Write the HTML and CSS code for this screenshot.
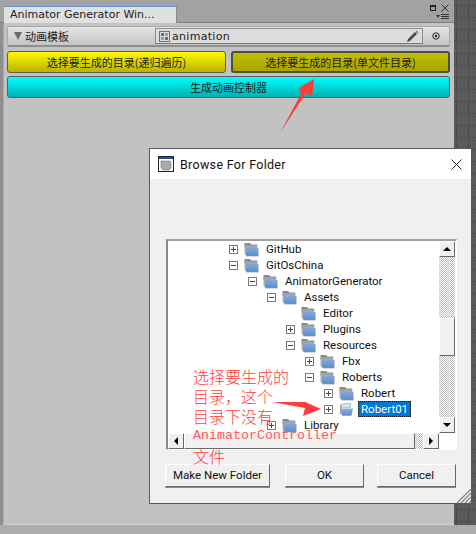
FILE: index.html
```html
<!DOCTYPE html>
<html lang="zh">
<head>
<meta charset="utf-8">
<title>Animator Generator</title>
<link rel="stylesheet" href="styles.css">
</head>
<body>
<svg width="0" height="0" class="defs">
  <defs>
    <linearGradient id="fg" x1="0" y1="0" x2="0" y2="1"><stop offset="0" stop-color="#86aee0"/><stop offset="1" stop-color="#5f8cc6"/></linearGradient>
    <symbol id="folder" viewBox="0 0 15 15">
      <path d="M0.5 1h5.5l1.5 1.5H13v3H.5z" fill="#8a8a8a"/>
      <path d="M0.5 3h13v10.5H2L.5 12z" fill="#a5a5a5" opacity=".85"/>
      <path d="M1 5l3 1h10.5v8H2.5z" fill="url(#fg)"/>
      <path d="M2.5 14.4h12" stroke="#c9c9c9" stroke-width=".8"/>
    </symbol>
    <symbol id="folder-open" viewBox="0 0 17 15">
      <path d="M2 2l9-1.5 2 .5v4H2z" fill="#e8e8e8" stroke="#999" stroke-width=".8"/>
      <path d="M1 3h2v10H1z" fill="#a5a5a5"/>
      <path d="M2 6.5h14l-2 8H3.5z" fill="url(#fg)"/>
    </symbol>
  </defs>
</svg>
<div class="editor">
  <div class="tabbar">
    <div class="tab">Animator Generator Win...</div>
    <div class="tab-tools">
      <div class="tool-top">
        <span class="max-icon"></span>
        <svg width="8" height="8" viewBox="0 0 8 8"><path d="M0.5 0.5l7 7M7.5 0.5l-7 7" stroke="#333" stroke-width="1" fill="none"/></svg>
      </div>
      <div class="menu-icon"><span class="menu-tri"></span><span class="menu-lines"></span></div>
    </div>
  </div>
  <div class="panel">
    <div class="field-row">
      <span class="fold"></span>
      <span class="field-label">动画模板</span>
      <div class="field">
        <svg class="asset-icon" width="11" height="11" viewBox="0 0 11 11"><rect x=".5" y=".5" width="10" height="10" fill="#d8dde0" stroke="#6b7378"/><rect x="2" y="2" width="3" height="3" fill="#5d7180"/><rect x="6" y="2" width="3" height="3" fill="#8fa3b0"/><rect x="2" y="6" width="3" height="3" fill="#8fa3b0"/><rect x="6" y="6" width="3" height="3" fill="#5d7180"/></svg>
        <span class="field-value">animation</span>
        <svg class="pencil" width="13" height="13" viewBox="0 0 13 13"><path d="M1 12l1-3 7-7 2 2-7 7z" fill="#4a4a4a"/><path d="M9.5 1.5l1-1 2 2-1 1z" fill="#777"/></svg>
      </div>
      <div class="picker"><svg width="8" height="8" viewBox="0 0 8 8"><circle cx="4" cy="4" r="3.2" fill="none" stroke="#222" stroke-width="1"/><circle cx="4" cy="4" r="1.2" fill="#222"/></svg></div>
    </div>
    <div class="btn-row">
      <div class="ubtn yellow">选择要生成的目录(递归遍历)</div>
      <div class="ubtn dark-yellow">选择要生成的目录(单文件目录)</div>
    </div>
    <div class="ubtn cyan">生成动画控制器</div>
  </div>
</div>

<svg class="arrow-one" width="40" height="60" viewBox="0 0 40 60"><polygon points="0,54 21,15 19,9 34,0 32,18 26,14" fill="#ff3b3b"/></svg>

<div class="dialog">
  <div class="titlebar">
    <svg width="16" height="16" viewBox="0 0 16 16"><rect x=".5" y=".5" width="15" height="15" fill="#fff" stroke="#222"/><rect x="1" y="1" width="14" height="2" fill="#2a4d8c"/><path d="M3 5h9l1 2v5l-2 2H5l-2-2z" fill="#aaa" stroke="#777" stroke-width=".6"/></svg>
    <span class="title-text">Browse For Folder</span>
    <svg class="close" width="11" height="11" viewBox="0 0 11 11"><path d="M.5.5l10 10M10.5.5l-10 10" stroke="#222" stroke-width="1" fill="none"/></svg>
  </div>
  <div class="dialog-body">
    <div class="treebox">
      <div class="tree">
        <div class="row l0"><span class="exp plus"></span><svg class="fld"><use href="#folder"/></svg><span class="name">GitHub</span></div>
        <div class="row l0"><span class="exp"></span><svg class="fld"><use href="#folder"/></svg><span class="name">GitOsChina</span></div>
        <div class="row l1"><span class="exp"></span><svg class="fld"><use href="#folder"/></svg><span class="name">AnimatorGenerator</span></div>
        <div class="row l2"><span class="exp"></span><svg class="fld"><use href="#folder"/></svg><span class="name">Assets</span></div>
        <div class="row l3"><span class="exp none"></span><svg class="fld"><use href="#folder"/></svg><span class="name">Editor</span></div>
        <div class="row l3"><span class="exp plus"></span><svg class="fld"><use href="#folder"/></svg><span class="name">Plugins</span></div>
        <div class="row l3"><span class="exp"></span><svg class="fld"><use href="#folder"/></svg><span class="name">Resources</span></div>
        <div class="row l4"><span class="exp plus"></span><svg class="fld"><use href="#folder"/></svg><span class="name">Fbx</span></div>
        <div class="row l4"><span class="exp"></span><svg class="fld"><use href="#folder"/></svg><span class="name">Roberts</span></div>
        <div class="row l5"><span class="exp plus"></span><svg class="fld"><use href="#folder"/></svg><span class="name">Robert</span></div>
        <div class="row l5"><span class="exp plus"></span><svg class="fld"><use href="#folder-open"/></svg><span class="name selected">Robert01</span></div>
        <div class="row l2"><span class="exp plus"></span><svg class="fld"><use href="#folder"/></svg><span class="name">Library</span></div>
      </div>
      <div class="vbar">
        <div class="sbtn"><span class="tri-up"></span></div>
        <div class="track v-top"></div>
        <div class="thumb v-thumb"></div>
        <div class="track fill"></div>
        <div class="sbtn"><span class="tri-down"></span></div>
      </div>
      <div class="hbar">
        <div class="sbtn"><span class="tri-left"></span></div>
        <div class="thumb h-thumb"></div>
        <div class="track fill"></div>
        <div class="sbtn"><span class="tri-right"></span></div>
      </div>
      <div class="corner"></div>
    </div>
    <div class="dlg-buttons">
      <div class="wbtn new-folder">Make New Folder</div>
      <div class="wbtn ok">OK</div>
      <div class="wbtn cancel">Cancel</div>
    </div>
  </div>
  <svg class="grip" width="14" height="14" viewBox="0 0 14 14"><path d="M14 0L0 14M14 4L4 14M14 8L8 14M14 12L12 14" stroke="#8a8a8a" stroke-width="1.4" fill="none"/></svg>
</div>

<div class="note">
  <div>选择要生成的</div>
  <div>目录，这个</div>
  <div>目录下没有</div>
  <div class="note-mono">AnimatorController</div>
  <div>文件</div>
</div>
<svg class="arrow-two" width="50" height="16" viewBox="0 0 50 16"><polygon points="0,1 34,1 31,0 49,8 31,15 33,7" fill="#ff3b3b"/></svg>
</body>
</html>
```
FILE: styles.css
```css
* { box-sizing: border-box; }
html, body { margin: 0; padding: 0; }
body {
  position: relative;
  width: 476px;
  height: 534px;
  overflow: hidden;
  background-color: #5a5a5a;
  background-image:
    repeating-linear-gradient(90deg, #4a4a4a 0 1px, transparent 1px 12px),
    repeating-linear-gradient(0deg, #4f4f4f 0 1px, transparent 1px 12px);
  font-family: "DejaVu Sans", sans-serif;
}
.defs { position: absolute; }
.editor {
  width: 454px;
  height: 534px;
  padding-left: 3px;
  display: flex;
  flex-direction: column;
  background: #8f8f8f;
  position: relative;
}
.editor::after {
  content: "";
  position: absolute;
  left: 0; right: -22px; bottom: 0; height: 9px;
  background: #adadad;
}
.tabbar {
  height: 23px;
  flex: none;
  background: #a2a2a2;
  display: flex;
  justify-content: space-between;
  border-bottom: 1px solid #7e7e7e;
  margin-left: -3px;
  padding: 6px 0 0 4px;
}
.tab {
  width: 173px;
  height: 17px;
  background: #e0e0e0;
  border-top: 1px solid #5f95d8;
  border-right: 1px solid #8a8a8a;
  padding-left: 6px;
  font-size: 11px;
  line-height: 15px;
  color: #222;
  white-space: nowrap;
}
.tab-tools {
  width: 24px;
  margin-top: -3px;
  display: flex;
  flex-direction: column;
  align-items: flex-end;
  gap: 2px;
}
.tool-top { display: flex; align-items: center; gap: 5px; margin-right: 5px; height: 9px; }
.max-icon { width: 6px; height: 6px; border: 1px solid #222; border-top-width: 2px; }
.menu-icon { display: flex; align-items: center; gap: 1px; margin-right: 5px; }
.menu-tri { width: 0; height: 0; border-left: 2.5px solid transparent; border-right: 2.5px solid transparent; border-top: 3px solid #333; }
.menu-lines { width: 8px; height: 5px; border-top: 1px solid #333; border-bottom: 1px solid #333; background: linear-gradient(#0000 1px, #333 1px 2px, #0000 2px); }
.panel {
  flex: none;
  height: 502px;
  background: #c2c2c2;
  border-left: 1px solid #aaa;
  border-bottom: 1px solid #d2d2d2;
  padding: 3px 4px 0 3px;
}
.field-row {
  height: 21px;
  margin-bottom: 4px;
  display: flex;
  align-items: center;
  background: linear-gradient(#e4e4e4, #c4c4c4);
  border: 1px solid #a8a8a8;
  border-bottom: 2px solid #8e8e8e;
  border-radius: 2px;
  padding-left: 5px;
}
.fold { flex: none; margin-left: 1px; width: 0; height: 0; border-left: 4.5px solid transparent; border-right: 4.5px solid transparent; border-top: 8px solid #6c6c6c; }
.field-label {
  flex: none;
  width: 130px;
  margin-left: 3px;
  font: 11px/16px "Noto Sans CJK SC", sans-serif;
  color: #222;
}
.field {
  flex: none;
  width: 268px;
  height: 16px;
  display: flex;
  align-items: center;
  background: #dcdcdc;
  border: 1px solid #8e8e8e;
  border-bottom-color: #777;
  padding-left: 3px;
}
.asset-icon { flex: none; }
.field-value { margin-left: 2px; font-size: 11px; letter-spacing: .3px; color: #222; flex: 1; }
.pencil { margin-right: 3px; }
.picker { width: 26px; display: flex; justify-content: center; }
.btn-row { display: flex; gap: 5px; margin-bottom: 3px; }
.ubtn {
  height: 22px;
  border: 1px solid #5c5c5c;
  border-radius: 3px;
  text-align: center;
  font: 11px/20px "Noto Sans CJK SC", sans-serif;
  color: #1c1c1c;
}
.yellow { flex: none; width: 219px; background: linear-gradient(#fff800, #b8b300); }
.dark-yellow { flex: none; width: 219px; background: linear-gradient(#c4bf00, #a8a400); border-color: #4f4f3a; border-width: 2px; line-height: 18px; }
.cyan { background: linear-gradient(#00ffff, #00b0b0); }

.arrow-one { position: absolute; left: 280px; top: 79px; }
.arrow-two { position: absolute; left: 272px; top: 401px; }

.dialog {
  position: absolute;
  left: 149px;
  top: 148px;
  width: 323px;
  height: 356px;
  background: #f0f0f0;
  border: 1px solid #5a5a5a;
  font-family: Roboto, sans-serif;
  color: #111;
}
.titlebar {
  height: 30px;
  background: #fff;
  display: flex;
  align-items: center;
  padding-left: 8px;
  position: relative;
}
.title-text { margin-left: 6px; font-size: 12.5px; letter-spacing: .3px; }
.close { position: absolute; right: 9px; top: 10px; }
.dialog-body { padding: 60px 0 0 16px; }
.treebox {
  width: 291px;
  height: 211px;
  display: grid;
  grid-template-columns: 271px 16px;
  grid-template-rows: 192px 16px;
  border: 1px solid #fff;
  border-top: 2px solid #a0a0a0;
  border-left: 2px solid #8a8a8a;
  background: #fff;
}
.tree { overflow: hidden; }
.row { height: 16px; display: flex; align-items: center; font-size: 11.5px; white-space: nowrap; }
.l0 { padding-left: 61px; }
.l1 { padding-left: 80px; }
.l2 { padding-left: 99px; }
.l3 { padding-left: 118px; }
.l4 { padding-left: 137px; }
.l5 { padding-left: 156px; }
.exp {
  flex: none;
  position: relative;
  width: 9px;
  height: 9px;
  border: 1px solid #7a7a7a;
  background: #fff;
}
.exp::before { content: ""; position: absolute; left: 1px; top: 3px; width: 5px; height: 1px; background: #444; }
.exp.plus::after { content: ""; position: absolute; left: 3px; top: 1px; width: 1px; height: 5px; background: #444; }
.exp.none { visibility: hidden; }
.fld { flex: none; width: 15px; height: 15px; margin-left: 6px; }
.name { margin-left: 4px; padding: 0 3px; height: 16px; line-height: 17px; }
.selected { background: #0078d7; color: #fff; outline: 1px dotted #111; outline-offset: -1px; }

.vbar { display: flex; flex-direction: column; }
.hbar { display: flex; }
.track, .corner { background-color: #fff; }
.track {
  background-image: conic-gradient(#bdbdbd 25%, #fff 0 50%, #bdbdbd 0 75%, #fff 0);
  background-size: 2px 2px;
}
.fill { flex: 1; }
.v-top { height: 61px; }
.sbtn, .thumb {
  flex: none;
  background: #f0f0f0;
  border: 1px solid;
  border-color: #fff #696969 #696969 #fff;
}
.sbtn { width: 16px; height: 16px; display: flex; align-items: center; justify-content: center; }
.v-thumb { height: 38px; }
.h-thumb { width: 231px; }
.tri-up { border-left: 4px solid transparent; border-right: 4px solid transparent; border-bottom: 4px solid #000; }
.tri-down { border-left: 4px solid transparent; border-right: 4px solid transparent; border-top: 4px solid #000; }
.tri-left { border-top: 4px solid transparent; border-bottom: 4px solid transparent; border-right: 4px solid #000; }
.tri-right { border-top: 4px solid transparent; border-bottom: 4px solid transparent; border-left: 4px solid #000; }

.dlg-buttons { display: flex; margin-top: 14px; margin-left: -1px; }
.wbtn {
  flex: none;
  height: 23px;
  background: #f0f0f0;
  border: 1px solid;
  border-color: #fff #696969 #696969 #fff;
  box-shadow: 0 1px 0 #8a8a8a;
  text-align: center;
  font-size: 11.5px;
  line-height: 20px;
}
.new-folder { width: 105px; }
.ok { width: 79px; margin-left: 15px; }
.cancel { width: 79px; margin-left: 13px; }
.grip { position: absolute; right: 0; bottom: 0; }

.note {
  position: absolute;
  left: 193px;
  top: 366px;
  font: 16px/20px "Noto Sans CJK SC", sans-serif;
  font-weight: 300;
  color: #ff4040;
  white-space: nowrap;
}
.note-mono { font: 13.33px/20px "Liberation Mono", monospace; color: #ff5a5a; }
```
